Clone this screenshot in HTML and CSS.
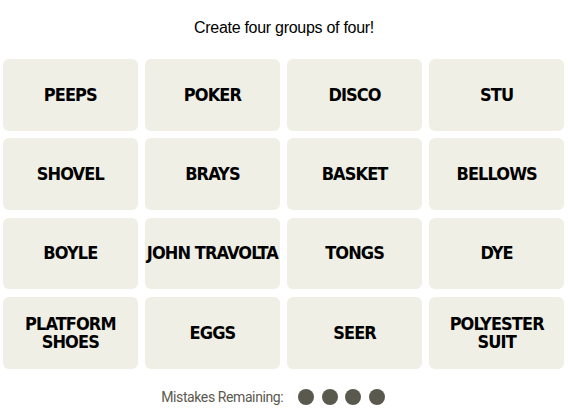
FILE: index.html
```html
<!DOCTYPE html>
<html lang="en">
<head>
<meta charset="utf-8">
<title>Connections</title>
<link rel="stylesheet" href="styles.css">
</head>
<body>
<main class="game">
  <p class="prompt">Create four groups of four!</p>
  <div class="board">
    <button class="tile">PEEPS</button>
    <button class="tile">POKER</button>
    <button class="tile">DISCO</button>
    <button class="tile">STU</button>
    <button class="tile">SHOVEL</button>
    <button class="tile">BRAYS</button>
    <button class="tile">BASKET</button>
    <button class="tile">BELLOWS</button>
    <button class="tile">BOYLE</button>
    <button class="tile">JOHN TRAVOLTA</button>
    <button class="tile">TONGS</button>
    <button class="tile">DYE</button>
    <button class="tile">PLATFORM SHOES</button>
    <button class="tile">EGGS</button>
    <button class="tile">SEER</button>
    <button class="tile">POLYESTER SUIT</button>
  </div>
  <div class="mistakes">
    <span class="mistakes-label">Mistakes Remaining:</span>
    <span class="dots">
      <span class="dot"></span><span class="dot"></span><span class="dot"></span><span class="dot"></span>
    </span>
  </div>
</main>
</body>
</html>
```
FILE: styles.css
```css
html, body {
  margin: 0;
  padding: 0;
  background: #ffffff;
}
.game {
  width: 568px;
  padding-top: 18px;
}
.prompt {
  margin: 0;
  height: 20px;
  line-height: 20px;
  text-align: center;
  font-family: "Liberation Sans", Arial, sans-serif;
  font-size: 16px;
  letter-spacing: -0.28px;
  color: #000000;
}
.board {
  margin: 21px 0 0 3px;
  width: 561px;
  display: grid;
  grid-template-columns: repeat(4, 1fr);
  grid-auto-rows: 71.75px;
  gap: 7.5px;
}
.tile {
  border: 0;
  margin: 0;
  padding: 0;
  border-radius: 6px;
  background: #efefe6;
  color: #000000;
  font-family: "DejaVu Sans Condensed", "DejaVu Sans", sans-serif;
  font-weight: 700;
  font-size: 18px;
  letter-spacing: -0.9px;
  line-height: 18px;
  text-align: center;
  display: flex;
  align-items: center;
  justify-content: center;
}
.mistakes {
  margin-top: 20.5px;
  height: 16px;
  display: flex;
  align-items: center;
  justify-content: center;
  padding-right: 22px;
  gap: 15px;
  font-family: "Roboto", "Liberation Sans", sans-serif;
  font-size: 14px;
  letter-spacing: -0.4px;
  color: #5a594e;
}
.mistakes-label {
  line-height: 16px;
}
.dots {
  display: flex;
  gap: 7.5px;
}
.dot {
  width: 16px;
  height: 16px;
  border-radius: 50%;
  background: #5a594e;
}
```
